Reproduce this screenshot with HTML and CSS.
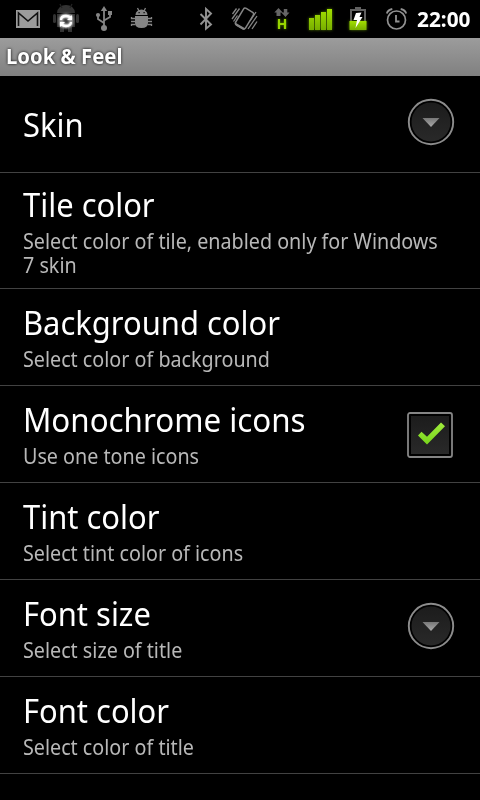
FILE: index.html
```
<!DOCTYPE html>
<html lang="en">
<head>
<meta charset="utf-8">
<title>Look &amp; Feel</title>
<link rel="stylesheet" href="styles.css">
</head>
<body>
<header class="status">
  <svg class="gmail" width="24" height="38" viewBox="16 0 24 38"><path fill="#9b9b9b" d="M16 10h24v18H16z"/><path d="M18.500 26V13l9.500 8 9.500-8v13" fill="none" stroke="#111" stroke-width="1.600"/></svg>
  <svg class="sync" width="30" height="38" viewBox="51 0 30 38">
    <g class="robot" fill="#333"><path d="M57 13a9 8 0 0 1 18 0zM57 14h18v13H57z"/><rect x="53" y="14" width="3" height="9" rx="1.500"/><rect x="76" y="14" width="3" height="9" rx="1.500"/><path d="M60 27h4v5h-4zM68 27h4v5h-4z"/></g>
    <path d="m60 4 2 4M72 4l-2 4" stroke="#222" stroke-width="1.300"/>
    <circle class="halo" cx="66" cy="21" r="5.500"/>
    <g class="glow" fill="none" stroke="#fff" stroke-width="2.300"><path d="M61 20q0-4 5-4 2.500 0 4.500 1.500M71 22q0 4-5 4-2.500 0-4.500-1.500"/><path fill="#fff" stroke="none" d="M72 15v5h-5zM60 27v-5h5z"/></g>
  </svg>
  <svg class="usb" width="17" height="38" viewBox="96 0 17 38"><g fill="none" stroke="#858585" stroke-width="1.800"><path d="M104 28V9M104 23l-6-4v-4M104 20.500l6-3.500v-4"/></g><g fill="#858585"><path d="m104 6 3.200 5h-6.400z"/><circle cx="104" cy="28" r="3"/><circle cx="98" cy="15" r="2.100"/><path d="M108 11h4v4h-4z"/></g></svg>
  <svg class="bug" width="22" height="38" viewBox="131 0 22 38"><g fill="#858585"><path d="M135.500 15a6 5.500 0 0 1 12 0zM135 16h13v7q0 5-6.500 5t-6.500-5z"/></g><path d="m137.500 8 1.500 3M145.500 8l-1.500 3M131.500 17v1.500h3.500M131 21.500h4M131.500 26v-1.500h4M151.500 17v1.500h-3.500M152 21.500h-4M151.500 26v-1.500h-4" fill="none" stroke="#858585" stroke-width="1.300"/><path fill="#000" d="M138.500 12h1.200v1.200h-1.200zM143.500 12h1.200v1.200h-1.200z"/></svg>
  <svg class="bluetooth" width="14" height="38" viewBox="199 0 14 38"><path d="m200.500 14 10.500 10.500-5 4.200V9l5 4.500L200.500 24.500" fill="none" stroke="#929292" stroke-width="1.900"/></svg>
  <svg class="vibrate" width="26" height="38" viewBox="232 0 26 38"><g fill="none" stroke="#858585"><rect x="238.800" y="9" width="11.500" height="19" rx="2" stroke-width="1.500" transform="rotate(31 244.500 18.500)"/><path stroke-width="1.300" d="m232.500 14 4-5.500M232 19l7.500-10.500M233.500 21.500l4-6M257 16l-9 13M257 21.500l-5 7.500M256 12l-6 9"/></g><path fill="#858585" d="m235 22.500 10.500 6q-1 1.700-3 1l-6.500-3.700q-2-1.300-1-3.300z"/></svg>
  <svg class="data" width="18" height="38" viewBox="273 0 18 38"><path fill="#666" d="m278.500 8 4.200 4.500h-2.200V16h-4v-3.500h-2.200zM285.500 17l-4.200-4.500h2.500V9h3.500v3.500h2.200z"/><path class="lime" fill="none" stroke="#97d400" stroke-width="2.200" d="M279 19v10M285 19v10M279 24h6"/></svg>
  <svg class="signal" width="26" height="38" viewBox="308 0 26 38"><defs><linearGradient id="g" x2="0" y2="1"><stop stop-color="#a2e000"/><stop offset="1" stop-color="#78ae00"/></linearGradient></defs><g class="lime" fill="url(#g)"><path d="M309 18h5v12h-5zM315 15h5v15h-5zM321 12h5v18h-5zM327 9h5v21h-5z"/></g></svg>
  <svg class="battery" width="20" height="38" viewBox="348 0 20 38"><path d="M351 21V10h14v11" fill="none" stroke="#616161" stroke-width="2"/><path fill="#616161" d="M355 7h6v3h-6z"/><path class="lime" fill="url(#g)" d="M349.500 21h17v9h-17z"/><path fill="#fff" d="m356 13 5.500-.5-2 4.500h3l-7 11 1.500-8h-3.500z"/></svg>
  <svg class="alarm" width="22" height="38" viewBox="386 0 22 38"><g fill="none" stroke="#929292"><circle cx="396.500" cy="20" r="9" stroke-width="1.700"/><path stroke-width="1.800" d="M386.800 13.500q1-3.500 5.500-4.500M406.200 13.500q-1-3.500-5.500-4.500M396 15v6.500h3.500"/></g></svg>
  <span class="clock">22:00</span>
</header>
<h1 class="titlebar"><span class="condensed">Look &amp; Feel</span></h1>
<main>
  <section class="row"><div class="text"><h2>Skin</h2></div>
    <svg class="more" width="48" height="48" viewBox="0 0 48 48"><defs><linearGradient id="d" x2="0" y2="1"><stop stop-color="#1c1c1c"/><stop offset="1" stop-color="#292929"/></linearGradient><linearGradient id="a" x2="0" y2="1"><stop stop-color="#777"/><stop offset="1" stop-color="#aaa"/></linearGradient></defs><circle cx="24" cy="24" r="22.200" fill="#000" stroke="#8c8c8c" stroke-width="1.900"/><circle cx="24" cy="24" r="19.500" fill="url(#d)"/><path fill="url(#a)" d="M15.500 20h17L24 29z"/></svg></section>
  <section class="row tall"><div class="text"><h2>Tile color</h2><p>Select color of tile, enabled only for Windows<br>7 skin</p></div></section>
  <section class="row"><div class="text"><h2>Background color</h2><p>Select color of background</p></div></section>
  <section class="row"><div class="text"><h2 class="wide">Monochrome icons</h2><p>Use one tone icons</p></div>
    <svg class="check" width="46" height="46" viewBox="0 0 46 46"><defs><linearGradient id="c" x2="0" y2="1"><stop stop-color="#a0ec3c"/><stop offset="1" stop-color="#78d41c"/></linearGradient></defs><rect x="1" y="1" width="44" height="44" rx="2" fill="#000" stroke="#858585" stroke-width="1.800"/><path fill="url(#d)" d="M4 4h38v38H4z"/><path fill="url(#c)" d="m11 23.500 3.500-3.800 5.500 5L34 10.500l4 3.700-18 18.300z"/></svg></section>
  <section class="row"><div class="text"><h2>Tint color</h2><p>Select tint color of icons</p></div></section>
  <section class="row"><div class="text"><h2>Font size</h2><p>Select size of title</p></div>
    <svg class="more" width="48" height="48" viewBox="0 0 48 48"><circle cx="24" cy="24" r="22.200" fill="#000" stroke="#8c8c8c" stroke-width="1.900"/><circle cx="24" cy="24" r="19.500" fill="url(#d)"/><path fill="url(#a)" d="M15.500 20h17L24 29z"/></svg></section>
  <section class="row"><div class="text"><h2>Font color</h2><p>Select color of title</p></div></section>
</main>
</body>
</html>
```
FILE: styles.css
```
* { box-sizing: border-box; margin: 0; padding: 0; }
body { width: 480px; height: 800px; background: #000; color: #fff; font-family: "Noto Sans", sans-serif; overflow: hidden; }
svg { display: block; flex: none; overflow: visible; }
.status { height: 38px; display: flex; padding-left: 16px; }
.sync { margin-left: 11px; }
.usb { margin-left: 15px; }
.bug { margin-left: 18px; }
.bluetooth { margin-left: 46px; }
.vibrate { margin-left: 19px; }
.data { margin-left: 15px; }
.signal { margin-left: 17px; }
.battery { margin-left: 14px; }
.alarm { margin-left: 18px; }
.robot { filter: blur(.7px); }
.halo { fill: none; stroke: #888; stroke-width: 4; filter: blur(1.5px); }
.glow { filter: drop-shadow(0 0 1px #fff); }
.lime { filter: drop-shadow(0 0 1.5px #578000); }
.clock { margin-left: 9px; font-size: 21px; font-weight: 700; line-height: 39px; transform: scaleX(.99); transform-origin: left; }
.titlebar { height: 38px; padding-left: 6px; background: linear-gradient(#9c9c9c, #808080); font-size: 21px; line-height: 36px; text-shadow: 0 0 3px #000; }
.condensed { display: inline-block; transform: scaleX(.966); transform-origin: left; }
.row { height: 97px; padding: 0 26px 0 23px; border-bottom: 1px solid #424242; display: flex; align-items: center; justify-content: space-between; }
.tall { height: 116px; }
.text { white-space: nowrap; }
h2 { font-size: 33px; font-weight: 400; line-height: 39px; transform: scaleX(.937); transform-origin: left; }
h2.wide { transform: scaleX(.948); }
p { margin-top: 5px; font-size: 21px; line-height: 24px; color: #b8b8b8; transform: scaleX(.939); transform-origin: left; }
.more { margin: 0 -1px 4px 0; }
.check { margin: 2px 1px 0 0; }
```
